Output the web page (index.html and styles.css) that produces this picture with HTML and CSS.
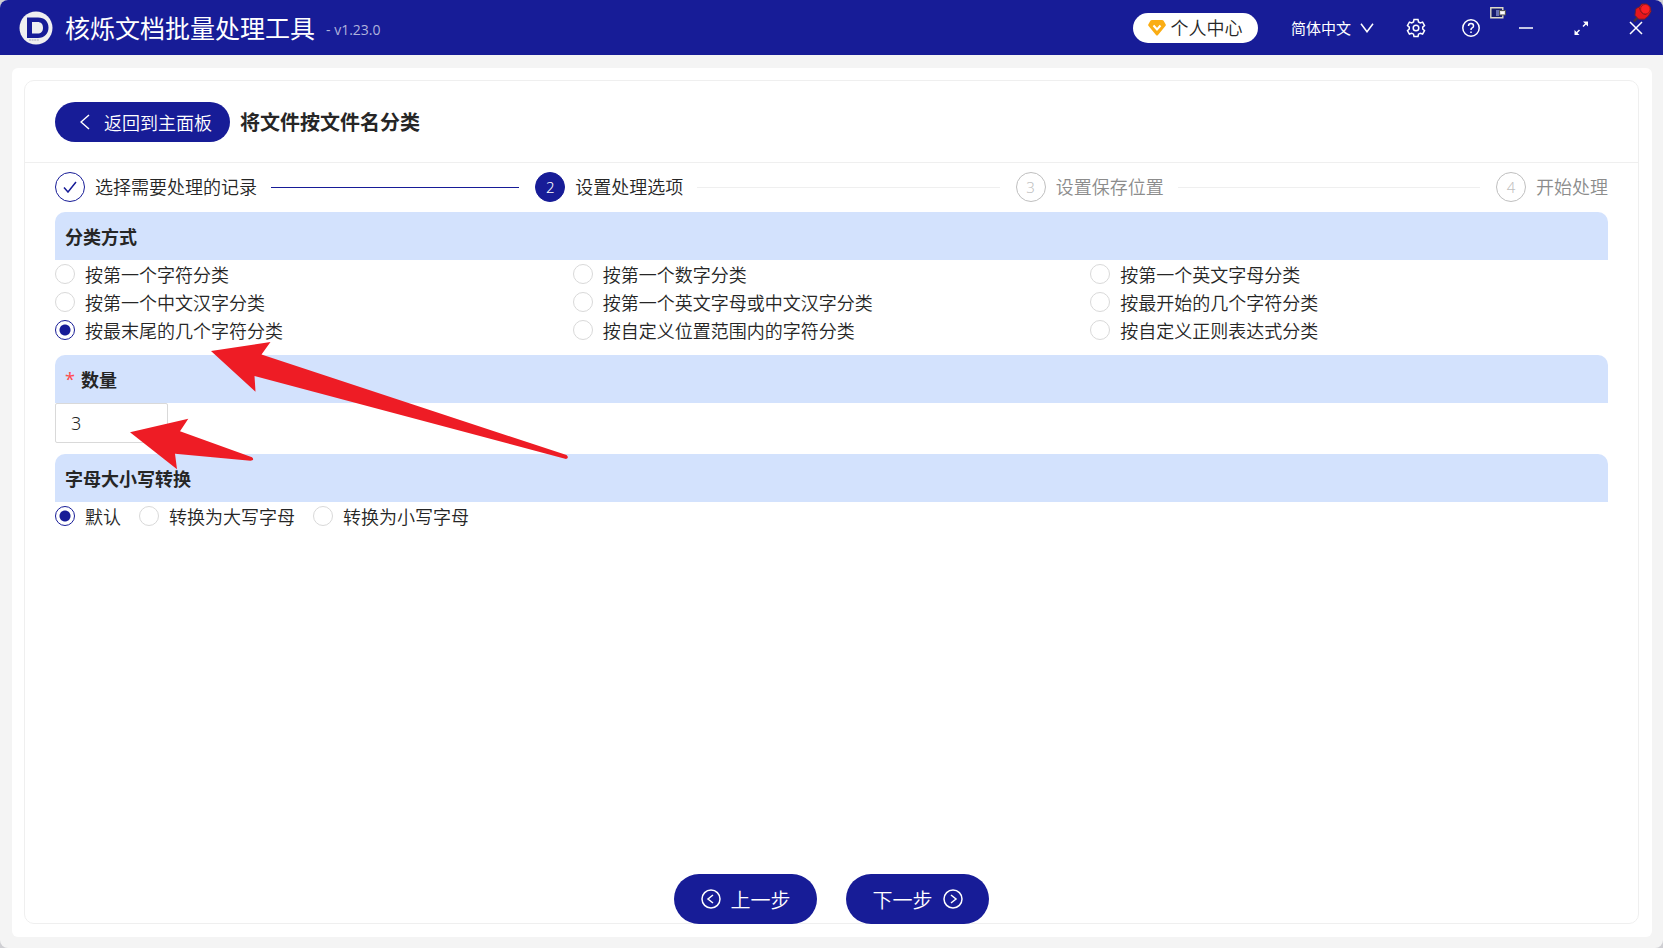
FILE: index.html
```html
<!DOCTYPE html>
<html lang="zh-CN">
<head>
<meta charset="utf-8">
<title>核烁文档批量处理工具</title>
<link rel="stylesheet" href="styles.css">
</head>
<body>
<div class="window">
  <header class="titlebar">
    <svg class="logo" viewBox="0 0 34 34" aria-hidden="true"><circle cx="17" cy="17" r="16.500" fill="#efeff0"/><path fill="#171c97" fill-rule="evenodd" d="M8 6.500h11c6.500 0 10.500 4 10.500 10S25.500 27 19 27H8zM13 11v11.500h5.500c3.600 0 5.500-2.200 5.500-5.800S22.100 11 18.500 11z"/><path d="M10 29h10" stroke="#a9a9b8" stroke-width="1" stroke-dasharray="2 .6"/></svg>
    <h1 class="app-name">核烁文档批量处理工具</h1>
    <span class="version">- v1.23.0</span>
    <button class="account" type="button">
      <svg class="gem" viewBox="0 0 18 16" aria-hidden="true"><path fill="#faad14" d="M4 0h10q1 0 1.600.8l2 3.400q.6 1-.2 1.900L10 15q-1 1.100-2 0L.6 6.100q-.8-.9-.2-1.900l2-3.400Q3 0 4 0z"/><path d="M5.500 5.500L9 9.500l3.500-4" fill="none" stroke="#fff" stroke-width="2"/></svg>
      个人中心
    </button>
    <button class="language" type="button">简体中文
      <svg class="chevron" viewBox="0 0 14 10" aria-hidden="true"><path d="M1 .8l6 8 6-8"/></svg>
    </button>
    <nav class="tools">
      <button class="tool" type="button" aria-label="设置"><svg viewBox="0 0 20 20"><path d="M8 1.500h4l.5 2.400 1.800 1 2.300-.8 1.900 3.400-1.800 1.600v1.900l1.800 1.600-1.900 3.400-2.300-.8-1.800 1-.5 2.400H8l-.5-2.400-1.800-1-2.300.8-1.900-3.400L3.300 11V9.100L1.500 7.500l1.900-3.400 2.300.8 1.800-1z"/><circle cx="10" cy="10" r="2.800"/></svg></button>
      <button class="tool" type="button" aria-label="帮助"><svg viewBox="0 0 20 20"><circle cx="10" cy="10" r="8.200"/><path d="M7.500 8q0-2.500 2.500-2.500T12.500 8q0 1.300-1.300 1.900T10 12"/><path d="M10 13.500v1.500"/></svg></button>
      <button class="tool" type="button" aria-label="最小化"><svg viewBox="0 0 20 20"><path d="M3 10h14"/></svg></button>
      <button class="tool" type="button" aria-label="还原"><svg viewBox="0 0 20 20"><path d="M5 15.500l3.500-3.500M12 8.500l3.500-3.500"/><path class="solid" d="M12 3.500h5v5zM3.500 12v5h5z"/></svg></button>
      <button class="tool" type="button" aria-label="关闭"><svg viewBox="0 0 20 20"><path d="M4 4l12 12M16 4L4 16"/></svg></button>
    </nav>
    <svg class="dock" viewBox="0 0 16 12" aria-hidden="true"><path d="M.8.8h12v10H.8z" fill="#171c6f" stroke="#ddd9c8" stroke-width="1.400"/><path d="M6 3h3v6H6z" fill="#6970b5"/><path d="M9.500 3.500h6v4.500h-6z" fill="#e6e6e6" stroke="#555"/><path d="M11 5h3v2h-3z" fill="#fff"/></svg>
    <svg class="pin" viewBox="0 0 20 20" aria-hidden="true"><path d="M6 14l-5 5.500" stroke="#443338" stroke-width="2.500"/><path d="M3 6l4-2 2-3h5l4 3 1 5-3 5-4 3H6l-4-4z" fill="#e5161c" stroke="#6b2130"/><path d="M7 5q1 7 7 7" stroke="#6b1520"/><circle cx="13" cy="6.500" r="5" fill="#fb2025" stroke="#9e1922"/></svg>
  </header>

  <main class="shell">
    <div class="panel">
      <div class="panel-head">
        <button class="back" type="button"><svg class="back-icon" viewBox="0 0 10 16" aria-hidden="true"><path d="M9 1L1 8l8 7"/></svg>返回到主面板</button>
        <h2 class="page-title">将文件按文件名分类</h2>
      </div>
      <div class="panel-body">
        <ol class="steps">
          <li class="step done"><span class="dot"><svg viewBox="0 0 14 12"><path d="M1 6.500L5 11 13 1"/></svg></span><span class="step-name">选择需要处理的记录</span></li>
          <li class="step active"><span class="dot">2</span><span class="step-name">设置处理选项</span></li>
          <li class="step"><span class="dot">3</span><span class="step-name">设置保存位置</span></li>
          <li class="step"><span class="dot">4</span><span class="step-name">开始处理</span></li>
        </ol>

        <section class="group">
          <h3 class="group-title">分类方式</h3>
          <div class="options">
            <label class="option"><input type="radio" name="mode">按第一个字符分类</label>
            <label class="option"><input type="radio" name="mode">按第一个数字分类</label>
            <label class="option"><input type="radio" name="mode">按第一个英文字母分类</label>
            <label class="option"><input type="radio" name="mode">按第一个中文汉字分类</label>
            <label class="option"><input type="radio" name="mode">按第一个英文字母或中文汉字分类</label>
            <label class="option"><input type="radio" name="mode">按最开始的几个字符分类</label>
            <label class="option"><input type="radio" name="mode" checked>按最末尾的几个字符分类</label>
            <label class="option"><input type="radio" name="mode">按自定义位置范围内的字符分类</label>
            <label class="option"><input type="radio" name="mode">按自定义正则表达式分类</label>
          </div>
        </section>

        <section class="group">
          <h3 class="group-title"><span class="required">*</span><label for="count">数量</label></h3>
          <input class="count" id="count" type="text" inputmode="numeric" value="3">
        </section>

        <section class="group">
          <h3 class="group-title">字母大小写转换</h3>
          <div class="options inline">
            <label class="option"><input type="radio" name="case" checked>默认</label>
            <label class="option"><input type="radio" name="case">转换为大写字母</label>
            <label class="option"><input type="radio" name="case">转换为小写字母</label>
          </div>
        </section>
      </div>
      <footer class="actions">
        <button class="action" type="button"><svg viewBox="0 0 20 20" aria-hidden="true"><circle cx="10" cy="10" r="9"/><path d="M12 6l-5 4 5 4"/></svg>上一步</button>
        <button class="action" type="button">下一步<svg viewBox="0 0 20 20" aria-hidden="true"><circle cx="10" cy="10" r="9"/><path d="M8 6l5 4-5 4"/></svg></button>
      </footer>
    </div>
  </main>

  <svg class="arrows" width="600" height="480" viewBox="0 0 600 480" aria-hidden="true"><path d="M211 351l59.500-9-9 12.500L566.500 455q3 3-.5 4L254.500 376l1 15.700z"/><path d="M130 432.300l58.300-13.600-8.300 12.600 72 26q3 3-1.500 3.500L175 453.700l2 15.600z"/></svg>
</div>
</body>
</html>
```
FILE: styles.css
```css
:root {
  --navy: #171c97;
  --ink: #262626;
  --line: #efefef;
}
* { box-sizing: border-box; }
body {
  margin: 0;
  background: #cfcfd3;
  color: var(--ink);
  font-family: "Noto Sans", "Noto Sans CJK SC", sans-serif;
  font-size: 18px;
  font-weight: 350;
}
button, input {
  font: inherit;
  color: inherit;
}
button {
  border: 0;
  background: none;
  padding: 0;
  cursor: pointer;
}
h1, h2, h3 { margin: 0; }
svg {
  flex: none;
  fill: none;
}
.window {
  position: relative;
  display: flex;
  flex-direction: column;
  min-height: 100vh;
  overflow: hidden;
  border-radius: 8px;
  background: #f4f4f4;
}

.titlebar {
  position: relative;
  display: flex;
  align-items: center;
  height: 55px;
  padding-left: 19px;
  background: var(--navy);
  color: #fff;
}
.logo {
  width: 34px;
  height: 34px;
}
.app-name {
  margin-left: 12px;
  font-size: 25px;
  font-weight: 400;
  line-height: 32px;
}
.version {
  margin-left: 11px;
  padding-top: 4px;
  color: #b0b3dc;
  font-family: "Open Sans", sans-serif;
  font-size: 14px;
  font-weight: 400;
}
.account {
  display: flex;
  align-items: center;
  justify-content: center;
  gap: 4px;
  width: 125px;
  height: 30px;
  margin-left: auto;
  border-radius: 15px;
  background: #fff;
  color: var(--ink);
  line-height: 28px;
}
.gem {
  width: 18px;
  height: 16px;
}
.language {
  display: flex;
  align-items: center;
  gap: 9px;
  margin-left: 33px;
  font-size: 15px;
  font-weight: 400;
}
.chevron {
  width: 14px;
  height: 10px;
}
.chevron path, .tool path, .tool circle {
  stroke: #fff;
  stroke-width: 1.5;
}
.tools {
  display: flex;
  margin-left: 14px;
}
.tool {
  display: grid;
  place-items: center;
  width: 55px;
  height: 55px;
}
.tool svg {
  width: 20px;
  height: 20px;
}
.tool .solid {
  fill: #fff;
  stroke-width: 0;
}
.dock {
  position: absolute;
  top: 7px;
  right: 157px;
  width: 16px;
  height: 12px;
}
.pin {
  position: absolute;
  top: 3px;
  right: 11px;
  width: 19px;
  height: 19px;
}

.shell {
  display: flex;
  flex: 1;
  margin: 13px 11px 11px 12px;
  padding: 12px 13px 13px 12px;
  border-radius: 6px;
  background: #fff;
}
.panel {
  display: flex;
  flex: 1;
  flex-direction: column;
  border: 1px solid var(--line);
  border-radius: 10px;
}
.panel-head {
  display: flex;
  align-items: center;
  gap: 10px;
  height: 82px;
  padding: 0 30px;
  border-bottom: 1px solid var(--line);
}
.back {
  display: flex;
  align-items: center;
  gap: 14px;
  width: 175px;
  height: 40px;
  padding-left: 25px;
  border-radius: 20px;
  background: var(--navy);
  color: #fff;
}
.back-icon {
  width: 10px;
  height: 16px;
}
.back-icon path {
  stroke: #fff;
  stroke-width: 1.5;
}
.page-title {
  font-size: 20px;
  font-weight: 700;
}
.panel-body {
  flex: 1;
  padding: 9px 30px 0;
}

.steps {
  display: flex;
  gap: 16px;
  margin: 0 0 10px;
  padding: 0;
  list-style: none;
}
.step {
  display: flex;
  flex: 1;
  align-items: center;
  gap: 10px;
  color: #8c8c8c;
  line-height: 30px;
}
.step:last-child { flex: none; }
.step:not(:last-child)::after {
  flex: 1;
  height: 1px;
  margin-left: 4px;
  background: var(--line);
  content: "";
}
.dot {
  display: grid;
  place-items: center;
  width: 30px;
  height: 30px;
  border: 1px solid #bfbfbf;
  border-radius: 50%;
  color: #bfbfbf;
  font-size: 15px;
  line-height: 28px;
}
.dot svg {
  width: 14px;
  height: 12px;
}
.dot path {
  stroke: var(--navy);
  stroke-width: 1.5;
}
.done, .active { color: var(--ink); }
.done .dot { border-color: var(--navy); }
.step.done::after { background: var(--navy); }
.active .dot {
  border-color: var(--navy);
  background: var(--navy);
  color: #fff;
}

.group { margin-bottom: 11px; }
.group-title {
  display: flex;
  align-items: center;
  gap: 6px;
  height: 48px;
  padding: 0 10px;
  border-radius: 10px 10px 0 0;
  background: #d3e2fd;
  font-size: 18px;
  font-weight: 700;
}
.required {
  color: #ff4d4f;
  font-weight: 400;
}
.options {
  display: grid;
  grid-template-columns: repeat(3, 1fr);
}
.options.inline {
  display: flex;
  gap: 18px;
}
.option {
  display: flex;
  align-items: center;
  gap: 10px;
  height: 28px;
}
.option input {
  appearance: none;
  width: 20px;
  height: 20px;
  margin: 0;
  border: 1px solid #d9d9d9;
  border-radius: 50%;
}
.option input:checked {
  border-color: var(--navy);
  background: radial-gradient(circle, var(--navy) 5px, #fff 6px);
}
.count {
  display: block;
  width: 113px;
  height: 40px;
  padding: 0 15px;
  border: 1px solid #d9d9d9;
  border-radius: 2px;
  background: #fff;
}

.actions {
  display: flex;
  justify-content: center;
  gap: 29px;
  margin-bottom: -1px;
}
.action {
  display: flex;
  align-items: center;
  justify-content: center;
  gap: 10px;
  width: 143px;
  height: 50px;
  border-radius: 25px;
  background: var(--navy);
  color: #fff;
  font-size: 20px;
}
.action svg {
  width: 20px;
  height: 20px;
  stroke: #fff;
  stroke-width: 1.5;
}

.arrows {
  position: absolute;
  top: 0;
  left: 0;
  fill: #ee1c25;
  pointer-events: none;
}
```
